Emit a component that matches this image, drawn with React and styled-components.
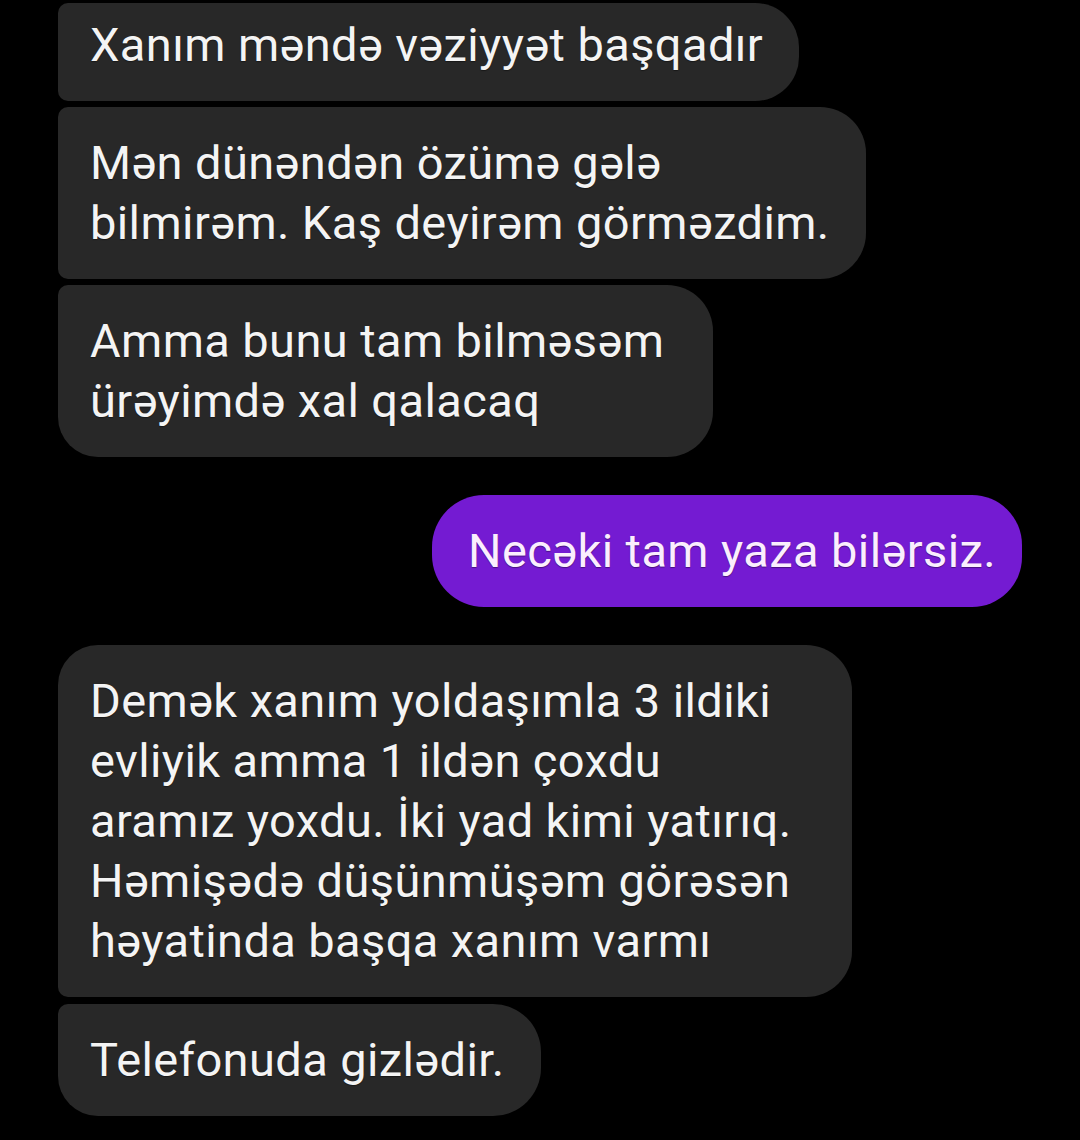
import React from "react";
import styled, { createGlobalStyle } from "styled-components";

const GlobalStyle = createGlobalStyle`
  html, body {
    margin: 0;
    padding: 0;
    background: #000;
  }
`;

const Screen = styled.div`
  width: 1080px;
  height: 1140px;
  overflow: hidden;
  background: #000;
  box-sizing: border-box;
  padding: 3px 58px 0;
  display: flex;
  flex-direction: column;
  font-family: Roboto, "Noto Sans", sans-serif;
`;

const Group = styled.div`
  display: flex;
  flex-direction: column;
  align-items: ${(p) => (p.$mine ? "flex-end" : "flex-start")};
  gap: ${(p) => p.$gap || 6}px;
  margin-bottom: 38px;
`;

const Bubble = styled.div`
  box-sizing: border-box;
  min-width: ${(p) => (p.$width ? `${p.$width}px` : "0")};
  padding: ${(p) => (p.$clipped ? 12 : 26)}px ${(p) => (p.$mine ? 26 : 36)}px 26px
    ${(p) => (p.$mine ? 36 : 32)}px;
  background: ${(p) => (p.$mine ? "#741bd2" : "#282828")};
  color: ${(p) => (p.$mine ? "#fbeefe" : "#f4f4f4")};
  font-size: 47px;
  letter-spacing: 0.4px;
  line-height: 60px;
  white-space: nowrap;
  border-radius: ${(p) => p.$radius};
  text-shadow: 0 1px 1px rgba(0, 0, 0, 0.4);
`;

const Line = styled.div``;

const first = [
  { lines: ["Xanım məndə vəziyyət başqadır"], radius: "10px 44px 44px 10px", clipped: true },
  { lines: ["Mən dünəndən özümə gələ", "bilmirəm. Kaş deyirəm görməzdim."], radius: "10px 46px 46px 10px" },
  { lines: ["Amma bunu tam bilməsəm", "ürəyimdə xal qalacaq"], radius: "10px 46px 46px 40px", width: 655 },
];

const reply = { lines: ["Necəki tam yaza bilərsiz."], radius: "52px 50px 50px 52px", mine: true };

const later = [
  {
    lines: [
      "Demək xanım yoldaşımla 3 ildiki",
      "evliyik amma 1 ildən çoxdu",
      "aramız yoxdu. İki yad kimi yatırıq.",
      "Həmişədə düşünmüşəm görəsən",
      "həyatinda başqa xanım varmı",
    ],
    radius: "40px 46px 46px 10px",
    width: 794,
  },
  { lines: ["Telefonuda gizlədir."], radius: "10px 48px 48px 40px" },
];

const renderBubble = (b, i) => (
  <Bubble key={i} $radius={b.radius} $clipped={b.clipped} $mine={b.mine} $width={b.width}>
    {b.lines.map((l, j) => (
      <Line key={j}>{l}</Line>
    ))}
  </Bubble>
);

export default function App() {
  return (
    <>
      <GlobalStyle />
      <Screen>
        <Group>{first.map(renderBubble)}</Group>
        <Group $mine>{renderBubble(reply, 0)}</Group>
        <Group $gap={7}>{later.map(renderBubble)}</Group>
      </Screen>
    </>
  );
}
